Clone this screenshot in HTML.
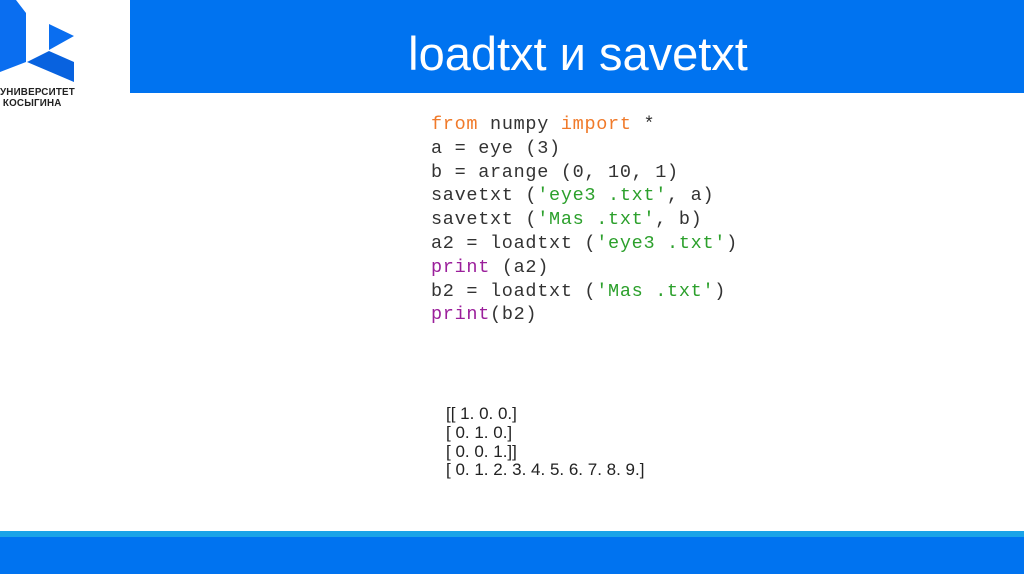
<!DOCTYPE html>
<html><head><meta charset="utf-8"><style>
body{margin:0;width:1024px;height:574px;background:#fff;position:relative;overflow:hidden;font-family:"Liberation Sans",sans-serif}
.hdr{position:absolute;left:130px;top:0;width:894px;height:93px;background:#0073f0}
.ttl{position:absolute;left:0;width:1024px;text-align:center;top:26px;font-size:47px;color:#fff;padding-left:132px;box-sizing:border-box}
.logo{position:absolute;left:0;top:0}
.lt{position:absolute;left:0;font-size:9.8px;font-weight:bold;color:#222;letter-spacing:0.2px}
pre{position:absolute;left:431px;top:113px;margin:0;font-family:"Liberation Mono",monospace;font-size:18.5px;letter-spacing:0.7px;line-height:23.8px;color:#333}
.o{color:#f07a2a}.g{color:#2ca02c}.p{color:#9b1f9b}
.out{position:absolute;left:446px;top:405px;font-size:17px;line-height:18.8px;color:#222}
.s1{position:absolute;left:0;top:531px;width:1024px;height:6px;background:#1aa3e8}
.s2{position:absolute;left:0;top:537px;width:1024px;height:37px;background:#0073f0}
</style></head><body>
<div class="hdr"></div>
<div class="ttl">loadtxt и savetxt</div>
<svg class="logo" width="90" height="90">
<polygon points="0,0 16,0 26,13 26,62 0,72" fill="#0a6ef0"/>
<polygon points="49,24 74,36 49,50" fill="#0a6ef0"/>
<polygon points="27,62 49,51 74,62 74,82" fill="#0862df"/>
</svg>
<div class="lt" style="top:87px">УНИВЕРСИТЕТ</div>
<div class="lt" style="top:98px">&nbsp;КОСЫГИНА</div>
<pre><span class="o">from</span> numpy <span class="o">import</span> *
a = eye (3)
b = arange (0, 10, 1)
savetxt (<span class="g">'eye3 .txt'</span>, a)
savetxt (<span class="g">'Mas .txt'</span>, b)
a2 = loadtxt (<span class="g">'eye3 .txt'</span>)
<span class="p">print</span> (a2)
b2 = loadtxt (<span class="g">'Mas .txt'</span>)
<span class="p">print</span>(b2)</pre>
<div class="out">[[ 1. 0. 0.]<br>[ 0. 1. 0.]<br>[ 0. 0. 1.]]<br>[ 0. 1. 2. 3. 4. 5. 6. 7. 8. 9.]</div>
<div class="s1"></div><div class="s2"></div>
</body></html>
